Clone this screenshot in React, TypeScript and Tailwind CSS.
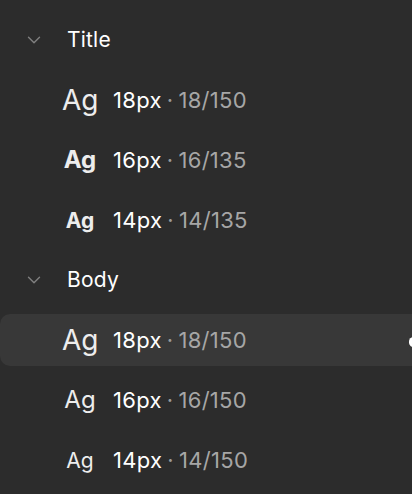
import { ChevronDown } from "lucide-react";

type Style = {
  id: string;
  size: number;
  ratio: string;
  agClass: string;
  active?: boolean;
};

type Group = {
  name: string;
  styles: Style[];
};

const groups: Group[] = [
  {
    name: "Title",
    styles: [
      { id: "t18", size: 18, ratio: "18/150", agClass: "text-[28px] font-normal" },
      { id: "t16", size: 16, ratio: "16/135", agClass: "text-[24px] font-bold" },
      { id: "t14", size: 14, ratio: "14/135", agClass: "text-[21px] font-bold" },
    ],
  },
  {
    name: "Body",
    styles: [
      { id: "b18", size: 18, ratio: "18/150", agClass: "text-[28px] font-normal", active: true },
      { id: "b16", size: 16, ratio: "16/150", agClass: "text-[24px] font-normal" },
      { id: "b14", size: 14, ratio: "14/150", agClass: "text-[21px] font-normal" },
    ],
  },
];

function StyleRow({ style }: { style: Style }) {
  return (
    <div className="h-[60px] py-1">
      <div
        className={
          style.active
            ? "relative h-[52px] flex items-center rounded-l-[10px] bg-[#383838]"
            : "relative h-[52px] flex items-center"
        }
      >
        <div className={"w-[98px] pl-[62px] text-center leading-none text-[#ededed] " + style.agClass}>
          Ag
        </div>
        <div className="ml-[15px] flex items-center text-[22px] leading-none tracking-[0.3px]">
          <span className="font-normal text-white">{style.size}px</span>
          <span className="mx-[5px] text-[#9a9a9a]">·</span>
          <span className="text-[#a6a6a6]">{style.ratio}</span>
        </div>
        {style.active && (
          <span className="absolute right-[-6px] top-[23px] h-[10px] w-[9px] rounded-full bg-white" />
        )}
      </div>
    </div>
  );
}

export default function App() {
  return (
    <div
      className="w-[412px] h-[494px] overflow-hidden bg-[#2c2c2c] pt-[10px]"
      style={{ fontFamily: "Inter, 'Noto Sans', sans-serif" }}
    >
      {groups.map((group) => (
        <div key={group.name}>
          {/* Group header */}
          <div className="h-[60px] flex items-center">
            <div className="w-[67px] flex justify-center">
              <ChevronDown size={22} strokeWidth={1.5} className="text-[#808080]" />
            </div>
            <span className="text-[21px] font-normal tracking-[0.2px] text-white">{group.name}</span>
          </div>
          {group.styles.map((s) => (
            <StyleRow key={s.id} style={s} />
          ))}
        </div>
      ))}
    </div>
  );
}
